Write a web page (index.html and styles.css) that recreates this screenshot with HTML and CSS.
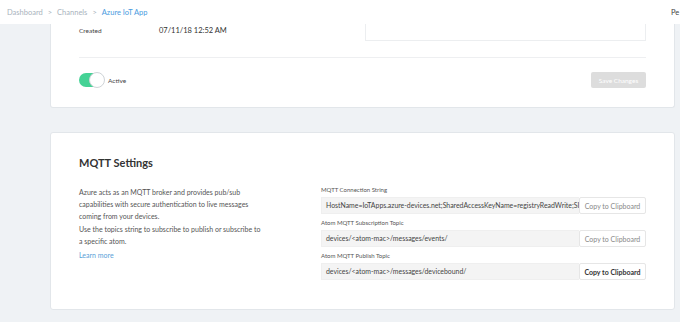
FILE: index.html
```html
<!DOCTYPE html>
<html lang="en">
<head>
  <meta charset="UTF-8" />
  <title>Azure IoT App</title>
  <link rel="stylesheet" href="styles.css">
</head>
<body>
  <div class="topbar">
    <div class="crumbs">
      <span>Dashboard</span><span class="sep">&gt;</span><span>Channels</span><span class="sep">&gt;</span><span class="current">Azure IoT App</span>
    </div>
    <div class="user">Pe</div>
  </div>

  <div class="main">
    <div class="card card-top">
      <div class="info-row">
        <div class="field">
          <span class="field-label">Created</span>
          <span class="field-value">07/11/18 12:52 AM</span>
        </div>
        <div class="notes-box"></div>
      </div>
      <div class="card-footer">
        <div class="switch-wrap">
          <div class="switch"><div class="knob"></div></div>
          <span class="switch-label">Active</span>
        </div>
        <button class="btn-save" disabled>Save Changes</button>
      </div>
    </div>

    <div class="card card-mqtt">
      <h2>MQTT Settings</h2>
      <div class="mqtt-grid">
        <div class="mqtt-text">
          <p>Azure acts as an MQTT broker and provides pub/sub capabilities with secure authentication to live messages coming from your devices.</p>
          <p>Use the topics string to subscribe to publish or subscribe to a specific atom.</p>
          <a href="#" class="learn">Learn more</a>
        </div>
        <div class="mqtt-fields">
          <label>MQTT Connection String</label>
          <div class="copy-field">
            <div class="copy-value">HostName=IoTApps.azure-devices.net;SharedAccessKeyName=registryReadWrite;SI</div>
            <button class="copy-btn">Copy to Clipboard</button>
          </div>
          <label>Atom MQTT Subscription Topic</label>
          <div class="copy-field">
            <div class="copy-value">devices/&lt;atom-mac&gt;/messages/events/</div>
            <button class="copy-btn">Copy to Clipboard</button>
          </div>
          <label>Atom MQTT Publish Topic</label>
          <div class="copy-field">
            <div class="copy-value">devices/&lt;atom-mac&gt;/messages/devicebound/</div>
            <button class="copy-btn hover">Copy to Clipboard</button>
          </div>
        </div>
      </div>
    </div>
  </div>
</body>
</html>
```

FILE: styles.css
```css
html, body {
  overflow: hidden;
}

body {
  margin: 0;
  font-family: Lato, 'Open Sans', sans-serif;
  background: #eff2f5;
  color: #333;
}

.topbar {
  height: 24px;
  background: #fff;
  display: flex;
  align-items: center;
  justify-content: space-between;
  padding-left: 7px;
}

.crumbs {
  font-size: 7.5px;
  color: #a9b3bd;
}

.crumbs .sep {
  margin: 0 5px;
}

.crumbs .current {
  color: #4a9be0;
}

.user {
  width: 9px;
  white-space: nowrap;
  font-size: 7.5px;
  color: #444;
}

.main {
  padding: 0 5px 0 50px;
}

.card {
  background: #fff;
  border: 1px solid #e2e6ea;
  border-radius: 3px;
  padding: 0 28px;
}

.card-top {
  border-top: none;
  border-radius: 0 0 3px 3px;
}

.info-row {
  display: flex;
  justify-content: space-between;
  align-items: flex-start;
  padding-bottom: 16px;
  border-bottom: 1px solid #eeeff1;
}

.field {
  display: flex;
  align-items: center;
  height: 13px;
}

.field-label {
  width: 80px;
  font-size: 6.5px;
  color: #444;
}

.field-value {
  font-size: 7.5px;
  color: #333;
}

.notes-box {
  width: 279px;
  height: 16px;
  border: 1px solid #eceef0;
  border-top: none;
}

.card-footer {
  display: flex;
  justify-content: space-between;
  align-items: center;
  padding: 14px 0 19px;
}

.switch-wrap {
  display: flex;
  align-items: center;
}

.switch {
  width: 25px;
  height: 14px;
  border-radius: 7px;
  background: #45d295;
  position: relative;
}

.knob {
  position: absolute;
  right: -1px;
  top: -1px;
  width: 14px;
  height: 14px;
  border-radius: 50%;
  background: #fff;
  border: 1px solid #d0d4d8;
}

.switch-label {
  margin-left: 4px;
  font-size: 6.5px;
  color: #444;
}

.btn-save {
  width: 55px;
  height: 16px;
  border: none;
  border-radius: 2px;
  background: #dddddd;
  color: #fff;
  font-family: inherit;
  font-size: 6.5px;
  padding: 0;
}

.card-mqtt {
  margin-top: 24px;
  padding-top: 23px;
  padding-bottom: 24px;
}

.card-mqtt h2 {
  margin: 0;
  font-size: 11px;
  line-height: 14px;
  font-weight: 700;
  color: #333;
}

.mqtt-grid {
  display: grid;
  grid-template-columns: 242px minmax(0, 1fr);
  margin-top: 16px;
}

.mqtt-text {
  width: 185px;
  font-size: 7px;
  line-height: 11.8px;
  color: #555;
  padding-top: 1px;
}

.mqtt-text p {
  margin: 0 0 2px;
}

.learn {
  display: block;
  margin-top: 0;
  color: #5b9fd8;
  text-decoration: none;
}

.mqtt-fields {
  min-width: 0;
}

.mqtt-fields label {
  display: block;
  font-size: 6px;
  line-height: 8px;
  color: #555;
  margin-bottom: 3px;
}

.copy-field {
  display: flex;
  height: 17px;
  margin-bottom: 5px;
}

.copy-value {
  flex: 1;
  min-width: 0;
  background: #f4f4f4;
  border: 1px solid #efefef;
  border-right: none;
  padding-left: 4px;
  font-size: 6.9px;
  line-height: 15px;
  color: #444;
  white-space: nowrap;
  overflow: hidden;
}

.copy-btn {
  width: 67px;
  flex-shrink: 0;
  background: #fff;
  border: 1px solid #e6e6e6;
  border-radius: 2px;
  font-family: inherit;
  font-size: 7px;
  color: #888;
  padding: 0;
}

.copy-btn.hover {
  color: #333;
  font-weight: 700;
}
```
